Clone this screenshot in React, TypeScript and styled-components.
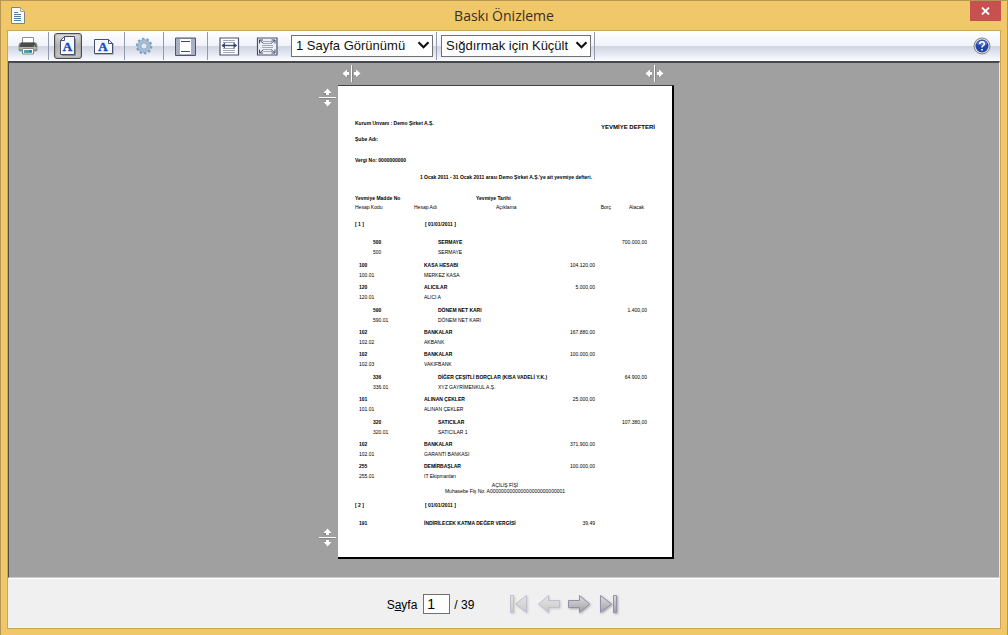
import React, { useState } from "react";
import styled, { createGlobalStyle, css } from "styled-components";

const Global = createGlobalStyle`
  *, *::before, *::after { box-sizing: border-box; }
  html, body, #root { height: 100%; }
  body { margin: 0; font-family: "Liberation Sans", Arial, sans-serif; color: #000; }
`;

const Frame = styled.div`
  display: flex;
  flex-direction: column;
  min-height: 100%;
  padding: 0 6px 6px 6px;
  background: #f0c869;
  border: 1px solid #b8964f;
`;

const TitleBar = styled.header`
  display: grid;
  grid-template-columns: 1fr auto 1fr;
  height: 29px;
`;

const TitleIcon = styled.div`
  padding: 6px 0 0 4px;
  svg { display: block; }
`;

const Title = styled.h1`
  margin: 0;
  font: 400 14px/30px "Open Sans", "Noto Sans", sans-serif;
  color: #3a3020;
`;

const CloseButton = styled.button`
  justify-self: end;
  display: grid;
  place-items: center;
  width: 31px;
  height: 20px;
  padding: 0;
  border: 0;
  background: #c75050;
`;

const Body = styled.main`
  display: flex;
  flex: 1;
  flex-direction: column;
  border: 1px solid #cca553;
  background: #f0f0f0;
`;

const Toolbar = styled.div`
  display: flex;
  align-items: stretch;
  height: 30px;
  background: linear-gradient(#ffffff 0, #eff2fa 15px, #d1d5e1 15px, #dce0ec 20px, #eef1fa 26px, #ffffff 30px);
`;

const Group = styled.div<{ $pad: string; $gap?: number }>`
  display: flex;
  align-items: center;
  gap: ${(p) => p.$gap ?? 8}px;
  margin: 1px 0;
  padding: ${(p) => p.$pad};
  border-right: 1px solid #9298ae;
`;

const ToolButton = styled.button<{ $active?: boolean }>`
  display: grid;
  place-items: center;
  width: 28px;
  height: 26px;
  padding: 0;
  border: 1px solid transparent;
  border-radius: 3px;
  background: none;
  ${(p) =>
    p.$active &&
    css`
      border-color: #4c4c4c;
      background: linear-gradient(#dedede, #b0b0b0 50%, #c9c9c9);
      box-shadow: inset 0 0 2px #777;
    `}
  svg { display: block; }
`;

const HelpButton = styled(ToolButton)`
  align-self: center;
  margin-left: auto;
  margin-right: 4px;
`;

const SelectBox = styled.div<{ $width: number }>`
  position: relative;
  width: ${(p) => p.$width}px;
  svg {
    position: absolute;
    right: 3px;
    top: 5px;
    pointer-events: none;
  }
`;

const Select = styled.select`
  display: block;
  width: 100%;
  height: 22px;
  padding: 0 4px;
  appearance: none;
  border: 1px solid #707070;
  border-radius: 0;
  background: #fff;
  color: #111;
  font: 13px/20px "Liberation Sans", Arial, sans-serif;
`;

const Canvas = styled.section`
  display: flex;
  flex: 1;
  justify-content: center;
  align-items: flex-start;
  padding: 1px 0 18px;
  background: #a0a0a0;
  border-top: 2px solid #45484f;
  border-left: 1px solid #4c4c4c;
  border-right: 1px solid #e8e8e8;
  border-bottom: 1px solid #c8c8c8;
`;

const Rulers = styled.div`
  display: grid;
  grid-template-columns: 20px auto 16px;
  grid-template-rows: 21px auto;
  grid-template-areas: ". top ." "side sheet .";
`;

const TopRuler = styled.div`
  grid-area: top;
  display: flex;
  justify-content: space-between;
  padding: 0 10px 0 4px;
`;

const SideRuler = styled.div`
  grid-area: side;
  display: flex;
  flex-direction: column;
  justify-content: space-between;
  padding: 3px 0 12px;
`;

const Sheet = styled.article`
  grid-area: sheet;
  width: 336px;
  padding: 33px 17px 29px;
  border: solid #000;
  border-width: 1px 2px 2px 0;
  border-top-color: #444;
  background: #fff;
  color: #000;
  font-size: 5px;
  line-height: 8px;
`;

const SheetHead = styled.div`
  display: flex;
  justify-content: space-between;
  font-weight: 700;
`;

const Company = styled.div<{ $gap: number }>`
  margin-bottom: ${(p) => p.$gap}px;
`;

const ReportName = styled.div`
  padding: 4px 0;
  font-size: 6px;
`;

const Period = styled.p`
  margin: 0 0 13px;
  padding-left: 2px;
  text-align: center;
  font-weight: 700;
`;

const Ledger = styled.table`
  width: 292px;
  table-layout: fixed;
  border-collapse: collapse;
  white-space: nowrap;
  td, th { padding: 0; height: 9px; line-height: 8px; vertical-align: top; text-align: left; }
  th { font-weight: 700; }
`;

const Lines = styled.tbody`
  tr:nth-child(even) td { height: 12px; }
  tr:nth-child(odd) td { height: 10px; }
  tr:nth-child(10n + 2) td, tr:nth-child(10n + 6) td { height: 13px; }
`;

const EntryRow = styled.tr<{ $height: number }>`
  && td { height: ${(p) => p.$height}px; font-weight: 700; }
  && td:nth-child(2) { padding-left: 11px; }
`;

const Cell = styled.td<{ $indent?: number; $bold?: boolean }>`
  && {
    padding-left: ${(p) => p.$indent ?? 0}px;
    font-weight: ${(p) => (p.$bold ? 700 : 400)};
  }
`;

const Amount = styled.td<{ $inset?: number }>`
  && { text-align: right; padding-right: ${(p) => p.$inset ?? 0}px; }
`;

const HeadCell = styled.th<{ $left?: number; $right?: number }>`
  && {
    padding-left: ${(p) => p.$left ?? 0}px;
    padding-right: ${(p) => p.$right ?? 0}px;
    text-align: ${(p) => (p.$right === undefined ? "left" : "right")};
    font-weight: 400;
  }
`;

const Voucher = styled.div`
  margin: -3px 0 7px;
  text-align: center;
  line-height: 6px;
`;

const Footer = styled.footer`
  display: flex;
  justify-content: center;
  align-items: center;
  height: 50px;
  border-top: 1px solid #fff;
  font-size: 12px;
`;

const PageInput = styled.input`
  width: 27px;
  height: 20px;
  margin: 0 4px 0 6px;
  padding: 0 3px;
  border: 1px solid #707070;
  background: #fff;
  font: 14px "Liberation Sans", Arial, sans-serif;
`;

const PageLabel = styled.label`
  padding-top: 3px;
`;

const PageCount = styled.span`
  padding-top: 3px;
`;

const Pager = styled.nav`
  display: flex;
  gap: 6px;
  margin-left: 33px;
`;

const PagerButton = styled.button`
  width: 24px;
  height: 24px;
  padding: 0;
  border: 0;
  background: none;
  &:disabled { opacity: 0.5; }
  svg { display: block; filter: drop-shadow(1px 1px 1px rgba(0, 0, 0, 0.3)); }
`;

const DocIcon = () => (
  <svg width="14" height="17" viewBox="0 0 14 17">
    <path d="M.5.5h9l4 4v12H.5z" fill="#fff" stroke="#85807a" />
    <path d="M9.5.5v4h4" fill="#e6e6e6" stroke="#a8a49c" />
    <path d="M3 5.5h4M3 7.5h7M3 9.5h7M3 11.5h7M3 13.5h7" stroke="#4c7fb0" />
  </svg>
);

const PrinterIcon = () => (
  <svg width="20" height="18" viewBox="0 0 20 18">
    <path d="M4.500 7V.500h11V7" fill="#fff" stroke="#8c8c8c" />
    <path d="M1 8q0-2 2-2h14q2 0 2 2v5q0 1-1 1H2q-1 0-1-1z" fill="#999" stroke="#666" strokeWidth=".6" />
    <path d="M3 5.500h14l1.500 4.500H1.500z" fill="#4b4b4b" />
    <path d="M1.500 11h17" stroke="#d2d2d2" />
    <path d="M4.500 11.500h11v5.500h-11z" fill="#fff" stroke="#888" />
    <path d="M6 13h8v3H6z" fill="#48a2d9" />
    <path d="M7 16l2-3 2 3z" fill="#59a545" />
    <circle cx="12.500" cy="14" r="1" fill="#244fae" />
    <circle cx="16.500" cy="9" r=".8" fill="#9fdc76" />
  </svg>
);

const LetterA = ({ x, y }: { x: number; y: number }) => (
  <text x={x} y={y} textAnchor="middle" fontFamily="Liberation Serif, serif" fontWeight="700" fontSize="13" fill="#1c49bd" stroke="#1c49bd" strokeWidth=".4">
    A
  </text>
);

const PortraitIcon = () => (
  <svg width="18" height="20" viewBox="0 0 18 20">
    <path d="M3 19.500h13.500V3" fill="none" stroke="#666" opacity=".6" />
    <path d="M5.500 .500h10v18h-14v-14z" fill="#f6f9ff" stroke="#45506a" />
    <path d="M5.500 .500v4h-4z" fill="#fff" stroke="#45506a" />
    <LetterA x={8.5} y={15} />
  </svg>
);

const LandscapeIcon = () => (
  <svg width="22" height="18" viewBox="0 0 22 18">
    <path d="M2 17.500h18.500V6" fill="none" stroke="#999" opacity=".6" />
    <path d="M1.500 2.500h14l4 4v10h-18z" fill="#f6f9ff" stroke="#45506a" />
    <path d="M15.500 2.500v4h4z" fill="#fff" stroke="#45506a" />
    <LetterA x={10} y={14} />
  </svg>
);

const GearIcon = () => (
  <svg width="18" height="18" viewBox="0 0 18 18">
    <circle cx="9.500" cy="9.500" r="7" fill="none" stroke="#555" strokeWidth="2" strokeDasharray="2.200 2.200" opacity=".3" />
    <circle cx="9" cy="9" r="7" fill="none" stroke="#7f9fbe" strokeWidth="2.400" strokeDasharray="2.200 2.200" />
    <circle cx="9" cy="9" r="4.800" fill="none" stroke="#a5c0da" strokeWidth="3.200" />
    <circle cx="9" cy="9" r="6.300" fill="none" stroke="#85a3c0" strokeWidth=".8" />
    <circle cx="9" cy="9" r="3.200" fill="#e3e8f1" stroke="#7896b5" strokeWidth=".8" />
  </svg>
);

const HeaderFooterIcon = () => (
  <svg width="22" height="19" viewBox="0 0 22 19">
    <path d="M1.500 1h20v17.500h-20z" fill="#a9b0c4" stroke="#4a546c" strokeWidth="1" />
    <path d="M6 2h11v15H6z" fill="#fff" />
    <path d="M7 4.500h9M7 14.500h9" stroke="#3f4a63" />
  </svg>
);

const FitWidthIcon = () => (
  <svg width="21" height="19" viewBox="0 0 21 19">
    <path d="M1 1h18.500v17H1z" fill="#fff" stroke="#4a546c" strokeWidth="1.200" />
    <path d="M4 3.500h12M4 5.500h12M4 11.500h12M4 13.500h12M4 15.500h12" stroke="#a4a9b6" />
    <path d="M3 8.500h14.500" stroke="#3d4c70" strokeWidth="1.400" />
    <path d="M6 5.500l-3.500 3L6 11.500zM14.500 5.500l3.500 3-3.500 3z" fill="#3d4c70" />
  </svg>
);

const FitPageIcon = () => (
  <svg width="22" height="19" viewBox="0 0 22 19">
    <path d="M1.500 1h19.500v17h-19.500z" fill="#eef0f6" stroke="#4a546c" strokeWidth="1.200" />
    <path d="M7 4.500h9M8 6.500h7M6 8.500h11M6 10.500h11M8 12.500h7M7 14.500h9" stroke="#a4a9b6" />
    <path d="M3.500 6.500V3h3.500M15.500 3h3.500v3.500M19 12.500v3.500h-3.500M7 16H3.500v-3.500M3.500 3l4 3.500M19 3l-4 3.500M3.500 16l4-3.500M19 16l-4-3.500" fill="none" stroke="#3d4c70" />
  </svg>
);

const HelpIcon = () => (
  <svg width="18" height="18" viewBox="0 0 18 18">
    <circle cx="9" cy="9" r="8" fill="#dedede" stroke="#858585" />
    <circle cx="9" cy="9" r="6.500" fill="#2146a5" />
    <path d="M3.500 7a6 6 0 0 1 11 0q-5 3-11 0z" fill="#5479cc" />
    <path d="M6.700 7q0-2.300 2.300-2.300T11.300 7q0 1.200-1.400 1.900-.9.500-.9 1.600M9 11.900v1.600" fill="none" stroke="#fff" strokeWidth="1.600" />
  </svg>
);

const Chevron = () => (
  <svg width="13" height="10" viewBox="0 0 13 10">
    <path d="M1.500 2.200l5 5 5-5" fill="none" stroke="#111" strokeWidth="2.200" />
  </svg>
);

const HandleSvg = styled.svg`
  display: block;
`;

const Handle = ({ vertical = false }: { vertical?: boolean }) => (
  <HandleSvg width="19" height="19" viewBox="0 0 19 19">
    <g transform={vertical ? "rotate(90 9.500 9.500)" : undefined}>
      <path d="M10.500 2v16M2 10.500l4-3v6zM18 10.500l-4-3v6z" stroke="#777" fill="#777" opacity=".6" />
      <path d="M9.500 1v17" stroke="#fff" />
      <path d="M.500 9.500L5 5.500v2.500h2v3H5v2.500zM18.500 9.500L14 5.500v2.500h-2v3h2v2.500z" fill="#fff" />
    </g>
  </HandleSvg>
);

const ARROWS = {
  first: "M3.500 3.500h3v17h-3zM19.500 3.500v17l-11-8.500z",
  previous: "M1.500 12L11.500 3.500v5h11v7h-11v5z",
  next: "M22.500 12L12.500 3.500v5h-11v7h11v5z",
  last: "M19.500 3.500h-3v17h3zM3.500 3.500v17l11-8.500z",
};

const ArrowIcon = ({ kind }: { kind: keyof typeof ARROWS }) => (
  <svg width="24" height="24" viewBox="0 0 24 24">
    <defs>
      <linearGradient id={`fill-${kind}`} x1="0" y1="0" x2="0" y2="1">
        <stop offset="0" stopColor="#dcdcdc" />
        <stop offset="1" stopColor="#a2a2a2" />
      </linearGradient>
    </defs>
    <path d={ARROWS[kind]} fill={`url(#fill-${kind})`} stroke="#9190ad" />
  </svg>
);

interface Account {
  code: string;
  name: string;
  subCode: string;
  subName: string;
  debit?: string;
  credit?: string;
}

const accounts: Account[] = [
  { code: "500", name: "SERMAYE", subCode: "500", subName: "SERMAYE", credit: "700.000,00" },
  { code: "100", name: "KASA HESABI", subCode: "100.01", subName: "MERKEZ KASA", debit: "104.120,00" },
  { code: "120", name: "ALICILAR", subCode: "120.01", subName: "ALICI A", debit: "5.000,00" },
  { code: "590", name: "DÖNEM NET KARI", subCode: "590.01", subName: "DÖNEM NET KARI", credit: "1.400,00" },
  { code: "102", name: "BANKALAR", subCode: "102.02", subName: "AKBANK", debit: "167.880,00" },
  { code: "102", name: "BANKALAR", subCode: "102.03", subName: "VAKIFBANK", debit: "100.000,00" },
  { code: "336", name: "DİĞER ÇEŞİTLİ BORÇLAR (KISA VADELİ Y.K.)", subCode: "336.01", subName: "XYZ GAYRİMENKUL A.Ş.", credit: "64.900,00" },
  { code: "101", name: "ALINAN ÇEKLER", subCode: "101.01", subName: "ALINAN ÇEKLER", debit: "25.000,00" },
  { code: "320", name: "SATICILAR", subCode: "320.01", subName: "SATICILAR 1", credit: "107.380,00" },
  { code: "102", name: "BANKALAR", subCode: "102.01", subName: "GARANTİ BANKASI", debit: "371.900,00" },
  { code: "255", name: "DEMİRBAŞLAR", subCode: "255.01", subName: "IT Ekipmanları", debit: "100.000,00" },
];

const Columns = () => (
  <colgroup>
    <col width="59" />
    <col width="62" />
    <col width="69" />
    <col width="66" />
    <col width="36" />
  </colgroup>
);

const AccountRows = ({ item }: { item: Account }) => {
  const shift = item.credit ? 14 : 0;
  return (
    <>
      <tr>
        <Cell $indent={4 + shift} $bold>{item.code}</Cell>
        <Cell $indent={10 + shift} $bold colSpan={2}>{item.name}</Cell>
        <Amount $inset={16}>{item.debit}</Amount>
        <Amount>{item.credit}</Amount>
      </tr>
      <tr>
        <Cell $indent={4 + shift}>{item.subCode}</Cell>
        <Cell $indent={10 + shift} colSpan={4}>{item.subName}</Cell>
      </tr>
    </>
  );
};

export default function App() {
  const [page, setPage] = useState("1");
  return (
    <>
      <Global />
      <Frame>
        <TitleBar>
          <TitleIcon><DocIcon /></TitleIcon>
          <Title>Baskı Önizleme</Title>
          <CloseButton aria-label="Kapat">
            <svg width="9" height="8" viewBox="0 0 9 8">
              <path d="M1 .500l7 7M8 .500l-7 7" stroke="#fff" strokeWidth="1.800" />
            </svg>
          </CloseButton>
        </TitleBar>
        <Body>
          <Toolbar role="toolbar">
            <Group $pad="0 6px">
              <ToolButton aria-label="Yazdır"><PrinterIcon /></ToolButton>
            </Group>
            <Group $pad="0 6px 0 5px">
              <ToolButton $active aria-label="Dikey"><PortraitIcon /></ToolButton>
              <ToolButton aria-label="Yatay"><LandscapeIcon /></ToolButton>
            </Group>
            <Group $pad="0 5px">
              <ToolButton aria-label="Sayfa Yapısı"><GearIcon /></ToolButton>
            </Group>
            <Group $pad="0 8px 0 7px">
              <ToolButton aria-label="Üstbilgi ve altbilgi"><HeaderFooterIcon /></ToolButton>
            </Group>
            <Group $pad="0 3px 0 7px" $gap={10}>
              <ToolButton aria-label="Tam Genişlik"><FitWidthIcon /></ToolButton>
              <ToolButton aria-label="Tam Sayfa"><FitPageIcon /></ToolButton>
              <SelectBox $width={142}>
                <Select aria-label="Sayfa görünümü"><option>1 Sayfa Görünümü</option></Select>
                <Chevron />
              </SelectBox>
            </Group>
            <Group $pad="0 3px 0 4px">
              <SelectBox $width={150}>
                <Select aria-label="Yazdırma boyutu"><option>Sığdırmak için Küçült</option></Select>
                <Chevron />
              </SelectBox>
            </Group>
            <HelpButton aria-label="Yardım"><HelpIcon /></HelpButton>
          </Toolbar>
          <Canvas>
            <Rulers>
              <TopRuler>
                <Handle />
                <Handle />
              </TopRuler>
              <SideRuler>
                <Handle vertical />
                <Handle vertical />
              </SideRuler>
              <Sheet>
                <SheetHead>
                  <div>
                    <Company $gap={8}>Kurum Unvanı : Demo Şirket A.Ş.</Company>
                    <Company $gap={13}>Şube Adı:</Company>
                    <Company $gap={9}>Vergi No: 0000000000</Company>
                  </div>
                  <ReportName>YEVMİYE DEFTERİ</ReportName>
                </SheetHead>
                <Period>1 Ocak 2011 - 31 Ocak 2011 arası Demo Şirket A.Ş.'ye ait yevmiye defteri.</Period>
                <Ledger>
                  <Columns />
                  <thead>
                    <tr>
                      <th colSpan={2}>Yevmiye Madde No</th>
                      <th colSpan={3}>Yevmiye Tarihi</th>
                    </tr>
                    <tr>
                      <HeadCell>Hesap Kodu</HeadCell>
                      <HeadCell>Hesap Adı</HeadCell>
                      <HeadCell $left={20}>Açıklama</HeadCell>
                      <HeadCell $right={0}>Borç</HeadCell>
                      <HeadCell $right={3}>Alacak</HeadCell>
                    </tr>
                    <EntryRow $height={8}><td colSpan={5} /></EntryRow>
                    <EntryRow $height={18}>
                      <td>[ 1 ]</td>
                      <td colSpan={4}>[ 01/01/2011 ]</td>
                    </EntryRow>
                  </thead>
                  <Lines>
                    {accounts.map((item, i) => <AccountRows key={i} item={item} />)}
                  </Lines>
                </Ledger>
                <Voucher>
                  <div>AÇILIŞ FİŞİ</div>
                  <div>Muhasebe Fiş No: A000000000000000000000000001</div>
                </Voucher>
                <Ledger>
                  <Columns />
                  <tbody>
                    <EntryRow $height={18}>
                      <td>[ 2 ]</td>
                      <td colSpan={4}>[ 01/01/2011 ]</td>
                    </EntryRow>
                    <tr>
                      <Cell $indent={4} $bold>191</Cell>
                      <Cell $indent={10} $bold colSpan={2}>İNDİRİLECEK KATMA DEĞER VERGİSİ</Cell>
                      <Amount $inset={16}>39,49</Amount>
                      <td />
                    </tr>
                  </tbody>
                </Ledger>
              </Sheet>
            </Rulers>
          </Canvas>
          <Footer>
            <PageLabel htmlFor="page">S<u>a</u>yfa</PageLabel>
            <PageInput id="page" value={page} onChange={(e) => setPage(e.target.value)} />
            <PageCount>/ 39</PageCount>
            <Pager>
              <PagerButton disabled aria-label="İlk sayfa"><ArrowIcon kind="first" /></PagerButton>
              <PagerButton disabled aria-label="Önceki sayfa"><ArrowIcon kind="previous" /></PagerButton>
              <PagerButton aria-label="Sonraki sayfa"><ArrowIcon kind="next" /></PagerButton>
              <PagerButton aria-label="Son sayfa"><ArrowIcon kind="last" /></PagerButton>
            </Pager>
          </Footer>
        </Body>
      </Frame>
    </>
  );
}
